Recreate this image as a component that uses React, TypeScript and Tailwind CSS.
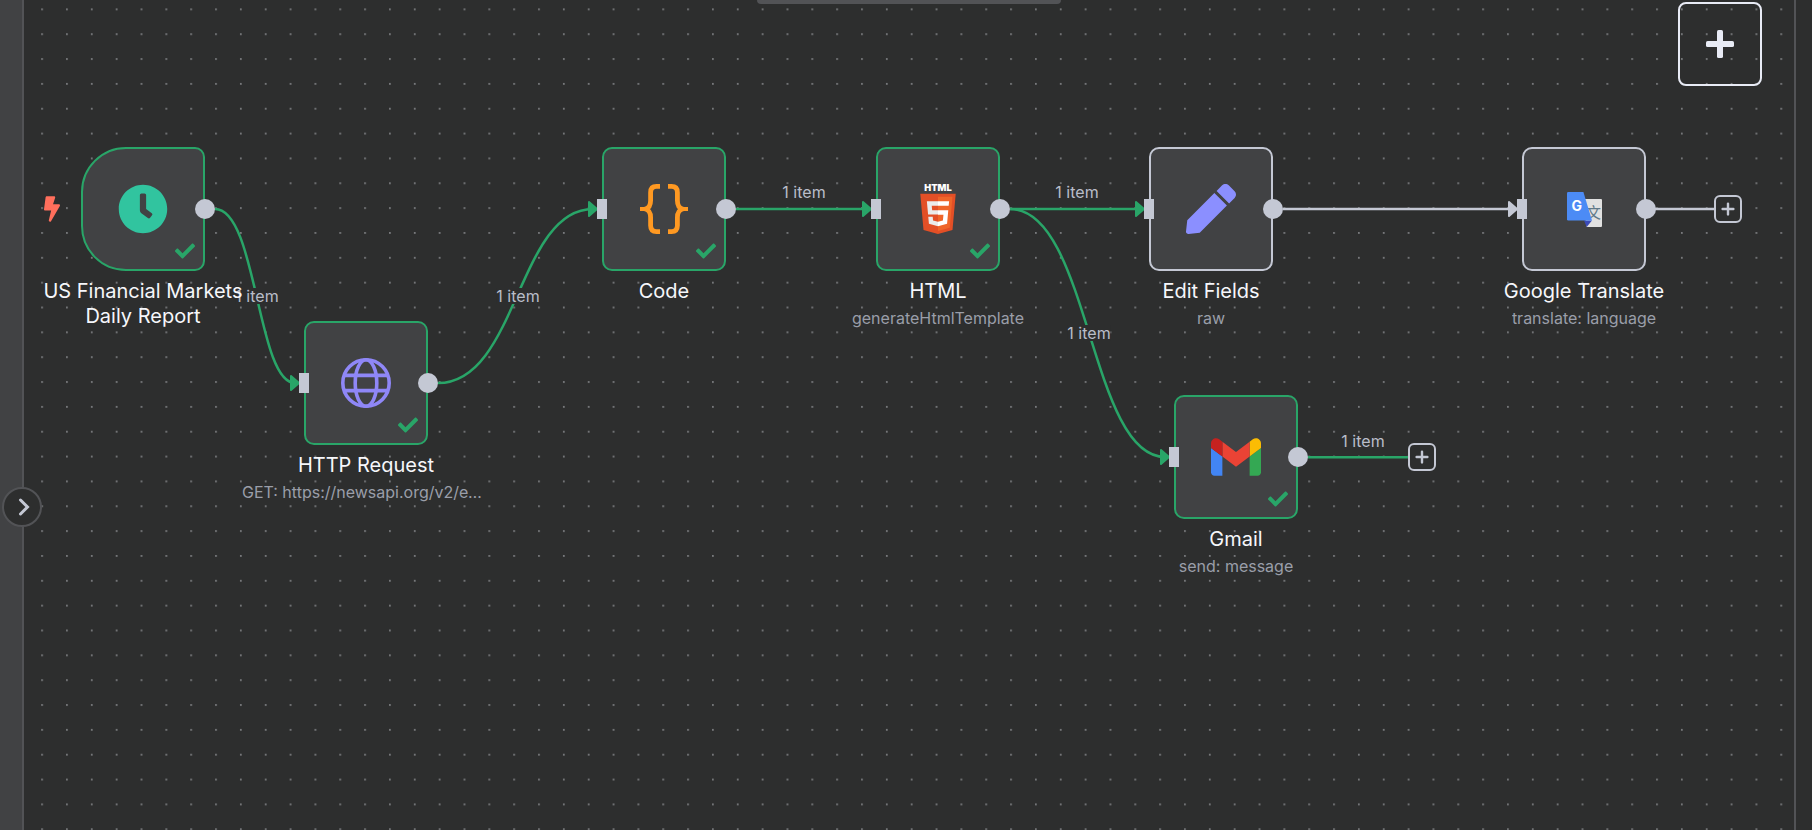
import type { ReactNode } from "react";
import { FaBolt, FaCheck, FaClock, FaPen } from "react-icons/fa";

const GlobeIcon = () => (
  <svg viewBox="0 0 50 50" className="size-[50px]" fill="none" stroke="#8f87f7" strokeWidth="3.6" aria-hidden="true">
    <circle cx="25" cy="25" r="23.2" />
    <ellipse cx="25" cy="25" rx="10.8" ry="23.2" />
    <path d="M3.5 17.4h43M3.5 32.6h43" />
  </svg>
);

const BracesIcon = () => (
  <svg viewBox="0 0 48 50" className="h-[50px] w-12" fill="none" stroke="#ff9922" strokeWidth="4.8" aria-hidden="true">
    <path d="M20 2.4H16.5Q10.6 2.4 10.6 8.4V16.5Q10.6 23.5 5.5 25Q10.6 26.5 10.6 33.5V41.6Q10.6 47.6 16.5 47.6H20" />
    <path d="M28 2.4H31.5Q37.4 2.4 37.4 8.4V16.5Q37.4 23.5 42.5 25Q37.4 26.5 37.4 33.5V41.6Q37.4 47.6 31.5 47.6H28" />
    <path d="M0 25H7M41 25H48" strokeWidth="4" />
  </svg>
);

const Html5Icon = () => (
  <svg viewBox="0 0 512 512" className="size-[50px] overflow-visible" aria-hidden="true">
    <text x="256" y="69" textAnchor="middle" fontFamily="Inter, sans-serif" fontWeight="900" fontSize="95" fill="#fff">
      HTML
    </text>
    <path fill="#e34f26" d="M107.6 471l-33-370.4h362.8l-33 370.2L255.7 512" />
    <path fill="#ef652a" d="M256 480.5V131h148.3L376 447" />
    <path fill="#ebebeb" d="M142 176.3h114v45.4h-64.2l4.2 46.5h60v45.3H154.4M156.4 336.3H202l3.2 36.3 50.8 13.6v47.4l-93.2-26" />
    <path fill="#fff" d="M369.6 176.3H255.8v45.4h109.6M361.3 268.2H255.8v45.4h56l-5.3 59-50.7 13.6v47.2l93-25.8" />
  </svg>
);

const GmailIcon = () => (
  <svg viewBox="52 42 88 66" className="h-[38px] w-[50px]" aria-hidden="true">
    <path fill="#4285f4" d="M58 108h14V74L52 59v43c0 3.32 2.69 6 6 6" />
    <path fill="#34a853" d="M120 108h14c3.32 0 6-2.69 6-6V59l-20 15" />
    <path fill="#fbbc04" d="M120 48v26l20-15v-8c0-7.42-8.47-11.65-14.4-7.2" />
    <path fill="#ea4335" d="M72 74V48l24 18 24-18v26L96 92" />
    <path fill="#c5221f" d="M52 51v8l20 15V48l-5.6-4.2c-5.94-4.45-14.4-.22-14.4 7.2" />
  </svg>
);

const TranslateIcon = () => (
  <svg viewBox="0 0 35 35" className="size-[35px] overflow-visible" aria-hidden="true">
    <path fill="#e1e1e1" d="M15 7H34Q35 7 35 8V34Q35 35 34 35H19.7Z" />
    <text x="26.6" y="26" textAnchor="middle" fontFamily="'Noto Sans CJK SC', sans-serif" fontWeight="400" fontSize="15" fill="#607988">
      文
    </text>
    <path fill="#3b4bb8" d="M17 28.4H25L19.7 35Z" />
    <path fill="#4c8bf5" d="M1.2 0H16.4L25 28.5H1.2Q0 28.5 0 27.3V1.2Q0 0 1.2 0Z" />
    <text x="9.8" y="19.4" textAnchor="middle" fontFamily="Inter, sans-serif" fontWeight="700" fontSize="14" fill="#fff">
      G
    </text>
  </svg>
);

type FlowNode = {
  id: string;
  title: string;
  subtitle?: string;
  x: number;
  y: number;
  icon: ReactNode;
  done?: boolean;
  trigger?: boolean;
};

// Coordinates are the top-left corner of each 124px card on the canvas.
const NODES: FlowNode[] = [
  {
    id: "trigger",
    title: "US Financial Markets Daily Report",
    x: 57,
    y: 147,
    icon: <FaClock className="size-[50px] text-[#31c49f]" />,
    done: true,
    trigger: true,
  },
  { id: "http", title: "HTTP Request", subtitle: "GET: https://newsapi.org/v2/everything", x: 280, y: 321, icon: <GlobeIcon />, done: true },
  { id: "code", title: "Code", x: 578, y: 147, icon: <BracesIcon />, done: true },
  { id: "html", title: "HTML", subtitle: "generateHtmlTemplate", x: 852, y: 147, icon: <Html5Icon />, done: true },
  {
    id: "edit",
    title: "Edit Fields",
    subtitle: "raw",
    x: 1125,
    y: 147,
    icon: <FaPen className="size-[50px] text-[#8b8fff]" />,
  },
  { id: "translate", title: "Google Translate", subtitle: "translate: language", x: 1498, y: 147, icon: <TranslateIcon /> },
  { id: "gmail", title: "Gmail", subtitle: "send: message", x: 1150, y: 395, icon: <GmailIcon />, done: true },
];

const CARD = 124;
const LABEL_WIDTH = 248;

const EDGES = [
  { from: [191, 209], to: [275, 383], done: true },
  { from: [414, 383], to: [573, 209], done: true },
  { from: [712, 209], to: [847, 209], done: true },
  { from: [986, 209], to: [1120, 209], done: true },
  { from: [986, 209], to: [1145, 457], done: true },
  { from: [1259, 209], to: [1493, 209], done: false },
];

const EDGE_LABELS = [
  { x: 233, y: 296 },
  { x: 494, y: 296 },
  { x: 780, y: 192 },
  { x: 1053, y: 192 },
  { x: 1065, y: 333 },
  { x: 1339, y: 441 },
];

const ADD_BUTTONS = [
  { x: 1690, y: 195, label: "Add node after Google Translate" },
  { x: 1384, y: 443, label: "Add node after Gmail" },
];

function Edges() {
  return (
    <svg className="pointer-events-none absolute inset-0 size-full" fill="none" aria-hidden="true">
      <defs>
        <pattern id="dots" x="17.2" y="8.4" width="24.845" height="24.845" patternUnits="userSpaceOnUse">
          <circle cx="0.9" cy="0.9" r="0.85" fill="#94969a" />
        </pattern>
      </defs>
      <rect width="100%" height="100%" fill="url(#dots)" />
      {EDGES.map(({ from: [x1, y1], to: [x2, y2], done }) => {
        const mid = (x1 + x2) / 2;
        const color = done ? "#29a568" : "#c4c8d4";
        return (
          <g key={`${x1}-${y1}-${x2}-${y2}`}>
            <path d={`M${x1} ${y1}C${mid} ${y1} ${mid} ${y2} ${x2 - 4} ${y2}`} stroke={color} strokeWidth="2.5" />
            <path
              d={`M${x2 - 8} ${y2 - 7}L${x2} ${y2}L${x2 - 8} ${y2 + 7}Z`}
              fill={color}
              stroke={color}
              strokeWidth="2"
              strokeLinejoin="round"
            />
          </g>
        );
      })}
      <path d="M1631 209H1691" stroke="#c4c8d4" strokeWidth="2.5" />
      <path d="M1284 457.3H1385" stroke="#29a568" strokeWidth="2.5" />
    </svg>
  );
}

function NodeCard({ node }: { node: FlowNode }) {
  return (
    <article
      className="absolute flex w-[248px] flex-col items-center gap-2"
      style={{ left: node.x - (LABEL_WIDTH - CARD) / 2, top: node.y }}
    >
      <div
        className={`relative flex size-[124px] items-center justify-center border-2 bg-[#414244] ${
          node.done ? "border-[#29a568]" : "border-[#c4c8d4]"
        } ${node.trigger ? "rounded-l-[45px] rounded-r-[10px]" : "rounded-[10px]"}`}
      >
        {node.icon}
        {node.done && <FaCheck className="absolute right-2 bottom-2 size-5 text-[#29a568]" />}
        {node.trigger ? (
          <FaBolt className="absolute top-[47px] -left-[39px] h-[26px] w-4 text-[#ff6f5c]" />
        ) : (
          <span className="absolute top-[50px] -left-[7px] h-5 w-2.5 bg-[#c4c8d4]" />
        )}
        <span className="absolute top-[50px] -right-3 size-5 rounded-full bg-[#c4c8d4]" />
      </div>
      <div className="flex w-full flex-col items-center gap-1 text-center">
        <h2 className="px-2 text-xl leading-[25px] font-normal text-[#f6f7fb]">{node.title}</h2>
        {node.subtitle && <p className="max-w-full truncate text-base leading-5 text-[#9a9ea9]">{node.subtitle}</p>}
      </div>
    </article>
  );
}

export default function App() {
  return (
    <div className="flex min-h-screen overflow-hidden bg-[#2d2e2e] font-[Inter,sans-serif] text-[#c4c8d4]">
      <aside className="w-6 shrink-0 border-r-2 border-[#525356] bg-[#414244]" />

      <main className="relative min-w-0 flex-1">
        <Edges />

        {EDGE_LABELS.map(({ x, y }) => (
          <span
            key={`${x}-${y}`}
            className="absolute -translate-x-1/2 -translate-y-1/2 bg-[#2d2e2e] text-base leading-4 whitespace-nowrap text-[#b9bdc9]"
            style={{ left: x, top: y }}
          >
            1 item
          </span>
        ))}

        {NODES.map((node) => (
          <NodeCard key={node.id} node={node} />
        ))}

        {ADD_BUTTONS.map(({ x, y, label }) => (
          <button
            key={label}
            type="button"
            aria-label={label}
            className="absolute flex size-7 items-center justify-center rounded-md border-2 border-[#c4c8d4] bg-[#2d2e2e]"
            style={{ left: x, top: y }}
          >
            <svg viewBox="0 0 14 14" className="size-3.5" stroke="#c4c8d4" strokeWidth="2.4" strokeLinecap="round" aria-hidden="true">
              <path d="M7 1.6v10.8M1.6 7h10.8" />
            </svg>
          </button>
        ))}

        <div className="absolute top-0 left-1/2 h-1 w-[304px] -translate-x-1/2 rounded-b-lg bg-[#525356]" />

        <button
          type="button"
          aria-label="Add node"
          className="absolute top-0.5 right-8 flex size-[84px] items-center justify-center rounded-lg border-2 border-[#e8ebf5]"
        >
          <svg viewBox="0 0 28 28" className="size-7" fill="#e8ebf5" aria-hidden="true">
            <rect x="11" width="6" height="28" rx="1.6" />
            <rect y="11" width="28" height="6" rx="1.6" />
          </svg>
        </button>

        <button
          type="button"
          aria-label="Expand panel"
          className="absolute top-[487px] -left-[22px] flex size-10 items-center justify-center rounded-full border-2 border-[#525356] bg-[#2d2e2e] pl-1"
        >
          <svg viewBox="0 0 12 18" className="h-[18px] w-3" fill="none" stroke="#c4c8d4" strokeWidth="3" strokeLinecap="round" aria-hidden="true">
            <path d="M2.5 2L9.5 9L2.5 16" />
          </svg>
        </button>
      </main>

      <aside className="w-[18px] shrink-0 border-l-2 border-[#525356]" />
    </div>
  );
}
